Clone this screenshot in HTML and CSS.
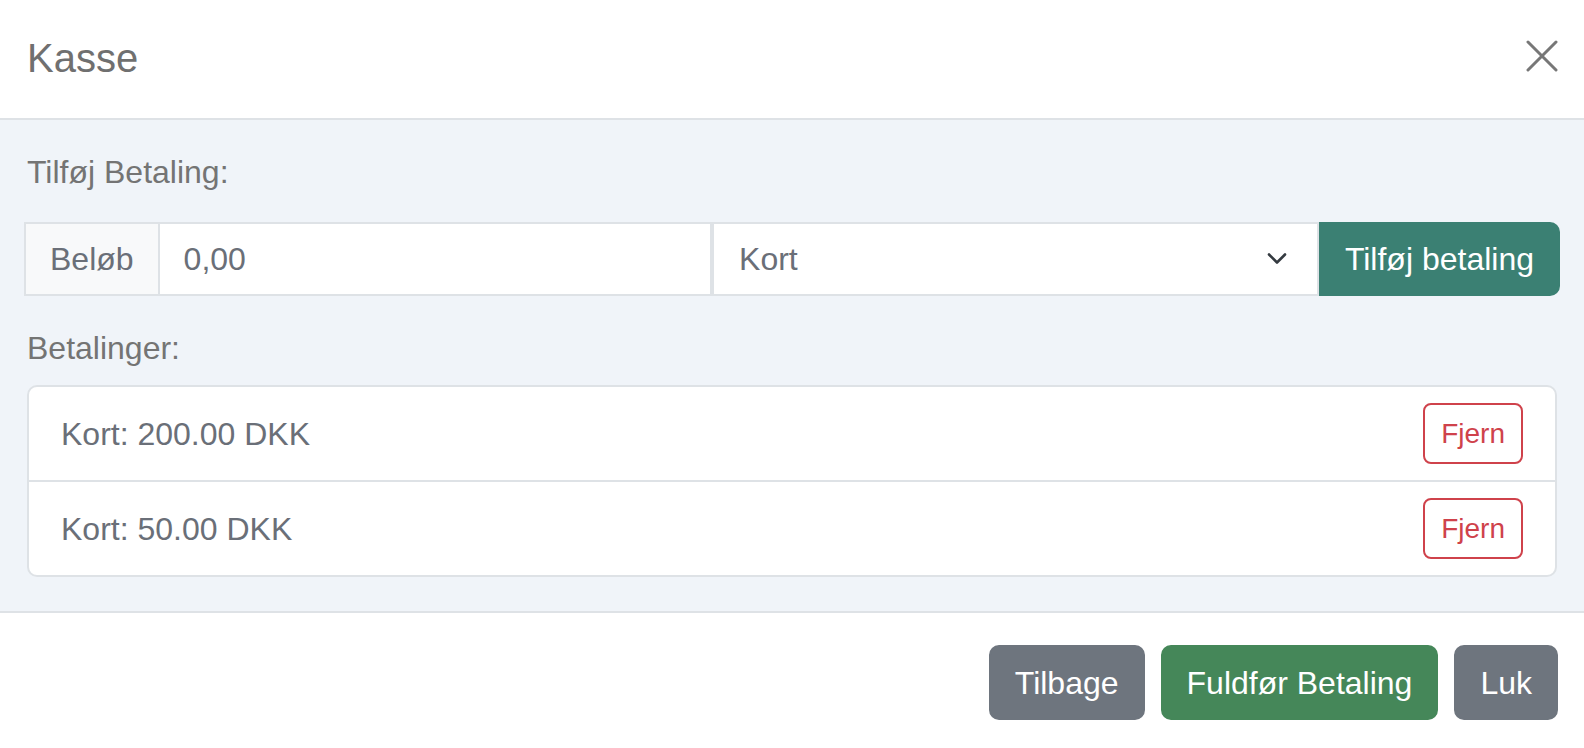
FILE: index.html
```html
<!DOCTYPE html>
<html lang="da">
<head>
<meta charset="utf-8">
<title>Kasse</title>
<link rel="stylesheet" href="styles.css">
</head>
<body>
<div class="modal">
  <header class="modal-header">
    <h5 class="modal-title">Kasse</h5>
    <button class="btn-close" aria-label="Luk">
      <svg width="32" height="32" viewBox="0 0 32 32"><path d="M2 2 L30 30 M30 2 L2 30" stroke="#777" stroke-width="3" stroke-linecap="round" fill="none"/></svg>
    </button>
  </header>
  <div class="modal-body">
    <div class="section-label">Tilføj Betaling:</div>
    <div class="input-group">
      <span class="addon">Beløb</span>
      <input class="form-control" type="text" value="0,00">
      <div class="form-select">
        <span>Kort</span>
        <svg class="chevron" width="20" height="14" viewBox="0 0 20 14"><path d="M2 2.5 L10 10.5 L18 2.5" stroke="#343a40" stroke-width="2.6" fill="none" stroke-linecap="round" stroke-linejoin="round"/></svg>
      </div>
      <button class="btn btn-teal">Tilføj betaling</button>
    </div>
    <div class="section-label section-label--list">Betalinger:</div>
    <ul class="list-group">
      <li class="list-item"><span>Kort: 200.00 DKK</span><button class="btn-sm-danger">Fjern</button></li>
      <li class="list-item"><span>Kort: 50.00 DKK</span><button class="btn-sm-danger">Fjern</button></li>
    </ul>
  </div>
  <footer class="modal-footer">
    <button class="btn btn-secondary">Tilbage</button>
    <button class="btn btn-success">Fuldfør Betaling</button>
    <button class="btn btn-secondary">Luk</button>
  </footer>
</div>
</body>
</html>
```

FILE: styles.css
```css
* { box-sizing: border-box; }
body {
  margin: 0;
  background: #fff;
  font-family: "Liberation Sans", Arial, Helvetica, sans-serif;
}
.modal {
  width: 1584px;
  height: 748px;
  overflow: hidden;
  display: flex;
  flex-direction: column;
}
.modal-header {
  height: 120px;
  flex: none;
  display: flex;
  align-items: center;
  justify-content: space-between;
  padding: 0 26px 3px 27px;
  border-bottom: 2px solid #dee2e6;
}
.modal-title {
  margin: 0;
  font-size: 40px;
  line-height: 48px;
  font-weight: 400;
  color: #707070;
}
.btn-close {
  border: 0;
  background: none;
  padding: 0;
  width: 32px;
  height: 32px;
  margin-bottom: 3px;
  display: block;
}
.btn-close svg { display: block; }
.modal-body {
  flex: none;
  background: #f0f4f9;
  padding: 28px 24px 34px;
  border-bottom: 2px solid #dee2e6;
}
.section-label {
  font-size: 32px;
  line-height: 48px;
  color: #747474;
  margin-bottom: 26px;
  padding-left: 3px;
}
.section-label--list {
  margin-top: 28px;
  margin-bottom: 13px;
}
.input-group {
  display: flex;
  height: 74px;
}
.addon {
  flex: none;
  display: flex;
  align-items: center;
  padding: 0 24px;
  background: #f8f9fa;
  border: 2px solid #dee2e6;
  font-size: 32px;
  color: #6a6f78;
}
.form-control {
  flex: 554 1 0;
  min-width: 0;
  width: 0;
  height: 74px;
  margin: 0;
  border: 2px solid #dee2e6;
  border-left: 0;
  background: #fff;
  padding: 0 24px;
  font-family: inherit;
  font-size: 32px;
  color: #6a6f78;
  outline: none;
  border-radius: 0;
}
.form-select {
  flex: 604 1 0;
  min-width: 0;
  display: flex;
  align-items: center;
  border: 2px solid #dee2e6;
  border-left-width: 2px;
  background: #fff;
  padding: 0 30px 0 25px;
  font-size: 32px;
  color: #6a6f78;
}
.form-select .chevron { margin-left: auto; display: block; }
.btn {
  font-family: inherit;
  font-size: 32px;
  line-height: 48px;
  padding: 12px 24px;
  border: 2px solid transparent;
  border-radius: 10px;
  color: #fff;
  white-space: nowrap;
  cursor: pointer;
}
.btn-teal {
  flex: none;
  height: 74px;
  padding: 0 24px;
  background: #3b8073;
  border-color: #3b8073;
  border-radius: 0 10px 10px 0;
}
.list-group {
  list-style: none;
  margin: 0 3px;
  padding: 0;
  background: #fff;
  border: 2px solid #dee2e6;
  border-radius: 10px;
}
.list-item {
  display: flex;
  align-items: center;
  justify-content: space-between;
  padding: 16px 32px;
  font-size: 32px;
  line-height: 48px;
  color: #6a6f78;
}
.list-item + .list-item {
  border-top: 2px solid #dee2e6;
}
.btn-sm-danger {
  font-family: inherit;
  font-size: 28px;
  line-height: 42px;
  height: 61px;
  padding: 0 16px;
  background: #fff;
  color: #cf424b;
  border: 2px solid #cf424b;
  border-radius: 8px;
  white-space: nowrap;
}
.modal-footer {
  flex: none;
  display: flex;
  justify-content: flex-end;
  gap: 16px;
  padding: 32px 26px 0 24px;
}
.modal-footer .btn { height: 75px; padding: 0 24px; }
.btn-secondary {
  background: #6e757e;
  border-color: #6e757e;
}
.btn-success {
  background: #458759;
  border-color: #458759;
}
```
